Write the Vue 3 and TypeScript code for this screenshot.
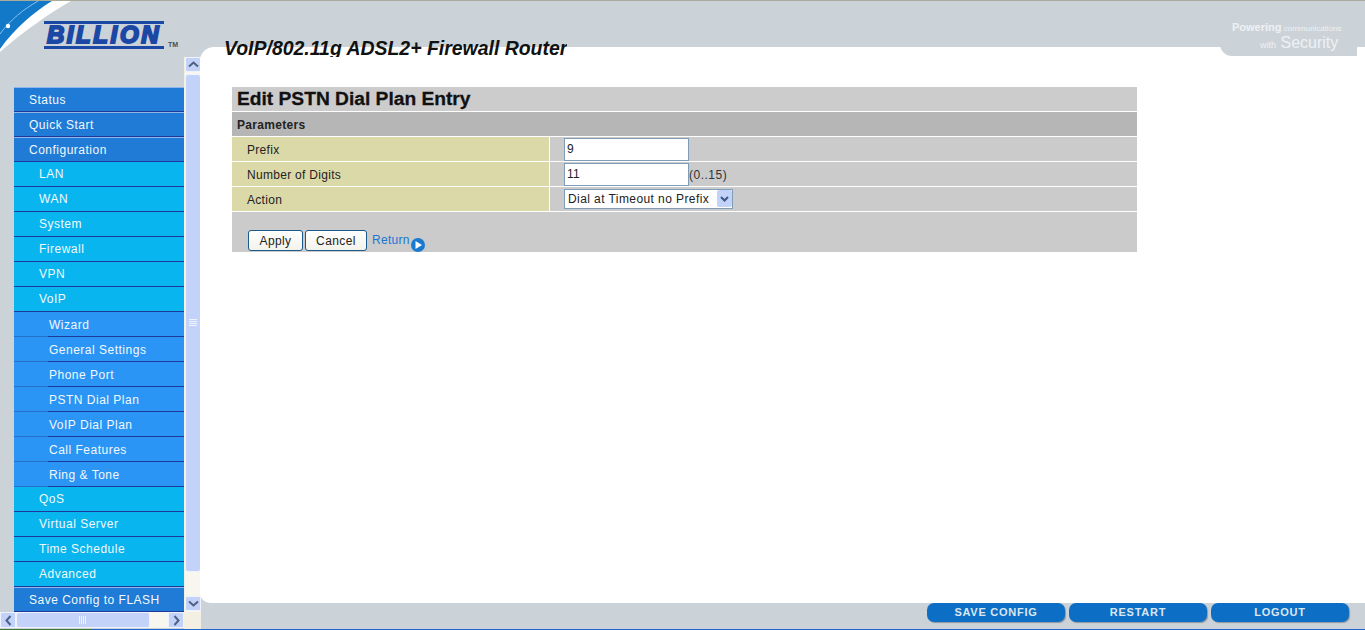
<script setup lang="ts">
const menu: { label: string; level: number }[] = [
  { label: 'Status', level: 1 },
  { label: 'Quick Start', level: 1 },
  { label: 'Configuration', level: 1 },
  { label: 'LAN', level: 2 },
  { label: 'WAN', level: 2 },
  { label: 'System', level: 2 },
  { label: 'Firewall', level: 2 },
  { label: 'VPN', level: 2 },
  { label: 'VoIP', level: 2 },
  { label: 'Wizard', level: 3 },
  { label: 'General Settings', level: 3 },
  { label: 'Phone Port', level: 3 },
  { label: 'PSTN Dial Plan', level: 3 },
  { label: 'VoIP Dial Plan', level: 3 },
  { label: 'Call Features', level: 3 },
  { label: 'Ring & Tone', level: 3 },
  { label: 'QoS', level: 2 },
  { label: 'Virtual Server', level: 2 },
  { label: 'Time Schedule', level: 2 },
  { label: 'Advanced', level: 2 },
  { label: 'Save Config to FLASH', level: 1 },
]

const footerButtons = ['SAVE CONFIG', 'RESTART', 'LOGOUT']
</script>

<template>
  <div class="page">
    <header class="top">
      <svg class="swoosh" width="80" height="52" viewBox="0 0 80 52">
        <path d="M0 0H71C50 12 24 30 0 51Z" fill="#fff" />
        <path d="M0 0H52C34 11 15 27 0 48Z" fill="#1278c8" />
        <path d="M38 0C24 8 10 19 0 33" fill="none" stroke="#8cc0ea" stroke-width="1" />
        <circle cx="8" cy="25" r="2.2" fill="#fff" />
      </svg>
      <div class="logo">
        <div class="logo-word">BILLION</div>
        <span class="tm">TM</span>
      </div>
      <div class="title">VoIP/802.11g ADSL2+ Firewall Router</div>
      <div class="tagline">
        <div class="tag-line1"><b>Powering</b> communications</div>
        <div class="tag-line2"><small>with</small> Security</div>
      </div>
    </header>

    <div class="body">
      <aside class="side">
        <div class="side-top">
          <nav class="menu">
            <a
              v-for="item in menu"
              :key="item.label"
              class="menu-item"
              :class="`level-${item.level}`"
            >{{ item.label }}</a>
          </nav>
          <div class="vscroll">
            <div class="sb-btn">
              <svg width="11" height="7" viewBox="0 0 11 7"><path d="M1 5.5 5.5 1.5 10 5.5" fill="none" stroke="#4d6185" stroke-width="2" /></svg>
            </div>
            <div class="vthumb">
              <svg width="8" height="8" viewBox="0 0 8 8"><path d="M0 .5H8M0 2.5H8M0 4.5H8M0 6.5H8" stroke="#eef3ff" stroke-width="1" /></svg>
            </div>
            <div class="sb-btn">
              <svg width="11" height="7" viewBox="0 0 11 7"><path d="M1 1.5 5.5 5.5 10 1.5" fill="none" stroke="#4d6185" stroke-width="2" /></svg>
            </div>
          </div>
        </div>
        <div class="hscroll">
          <div class="sb-btn">
            <svg width="7" height="11" viewBox="0 0 7 11"><path d="M5.5 1 1.5 5.5 5.5 10" fill="none" stroke="#4d6185" stroke-width="2" /></svg>
          </div>
          <div class="hthumb">
            <svg width="8" height="8" viewBox="0 0 8 8"><path d="M.5 0V8M2.5 0V8M4.5 0V8M6.5 0V8" stroke="#eef3ff" stroke-width="1" /></svg>
          </div>
          <div class="sb-btn push">
            <svg width="7" height="11" viewBox="0 0 7 11"><path d="M1.5 1 5.5 5.5 1.5 10" fill="none" stroke="#4d6185" stroke-width="2" /></svg>
          </div>
        </div>
      </aside>

      <div class="right">
        <main class="panel">
          <table class="form">
            <colgroup>
              <col class="col-label" />
              <col />
            </colgroup>
            <tbody>
              <tr class="head"><th colspan="2">Edit PSTN Dial Plan Entry</th></tr>
              <tr class="sub"><th colspan="2">Parameters</th></tr>
              <tr>
                <td class="label">Prefix</td>
                <td class="value"><input class="field" type="text" value="9" /></td>
              </tr>
              <tr>
                <td class="label">Number of Digits</td>
                <td class="value"><input class="field" type="text" value="11" /><span class="hint">(0..15)</span></td>
              </tr>
              <tr>
                <td class="label">Action</td>
                <td class="value">
                  <div class="select-wrap">
                    <select class="select">
                      <option>Dial at Timeout no Prefix</option>
                    </select>
                    <span class="select-arrow">
                      <svg width="9" height="6" viewBox="0 0 9 6"><path d="M1 1 4.5 4.5 8 1" fill="none" stroke="#3d5687" stroke-width="2" /></svg>
                    </span>
                  </div>
                </td>
              </tr>
              <tr class="actions">
                <td colspan="2">
                  <div class="actions-row">
                    <button class="btn apply" type="button">Apply</button>
                    <button class="btn cancel" type="button">Cancel</button>
                    <a class="return">Return</a>
                    <svg class="return-icon" width="14" height="14" viewBox="0 0 14 14">
                      <circle cx="7" cy="7" r="7" fill="#1a7ad2" />
                      <path d="M4.5 3 11 7 4.5 11Z" fill="#fff" />
                    </svg>
                  </div>
                </td>
              </tr>
            </tbody>
          </table>
        </main>
        <footer class="bottom">
          <button v-for="b in footerButtons" :key="b" class="foot-btn" type="button">{{ b }}</button>
        </footer>
      </div>
    </div>
    <div class="edge"></div>
  </div>
</template>

<style>
html, body {
  margin: 0;
  background: #cbd3d9;
}
</style>

<style scoped>
.page {
  width: 1365px;
  height: 630px;
  overflow: hidden;
  display: flex;
  flex-direction: column;
  background: #cbd3d9;
  font-family: "Liberation Sans", Arial, sans-serif;
  border-top: 1px solid #a9a99c;
  box-sizing: border-box;
}

.top {
  position: relative;
  height: 46px;
  flex: none;
  display: flex;
  z-index: 2;
}

.swoosh {
  position: absolute;
  left: 0;
  top: 0;
}

.logo {
  margin: 20px 0 0 44px;
  width: 156px;
  display: flex;
  align-items: flex-end;
  height: 28px;
}

.logo-word {
  width: 120px;
  height: 22px;
  border-top: 3px solid #1b48a4;
  border-bottom: 3px solid #1b48a4;
  color: #1b48a4;
  font: italic 900 24px/22px "Liberation Sans", Arial, sans-serif;
  letter-spacing: 2.6px;
  -webkit-text-stroke: 2px #1b48a4;
  text-align: center;
  white-space: nowrap;
  overflow: hidden;
}

.tm {
  font-size: 7px;
  font-weight: 700;
  color: #44505a;
  margin-left: 4px;
  line-height: 9px;
}

.title {
  margin: 37px 0 0 24px;
  height: 19px;
  line-height: 20px;
  overflow: hidden;
  font-size: 19.45px;
  font-weight: 700;
  font-style: italic;
  color: #111;
  white-space: nowrap;
}

.tagline {
  position: absolute;
  right: 8px;
  top: 0;
  width: 137px;
  height: 55px;
  background: #cbd3d9;
  border-bottom-left-radius: 12px;
  color: #eef1f3;
  box-sizing: border-box;
  padding: 20px 0 0 12px;
}

.tag-line1 {
  font-size: 8px;
  line-height: 12px;
  white-space: nowrap;
}

.tag-line1 b {
  font-size: 11px;
}

.tag-line2 {
  font-size: 16px;
  line-height: 15px;
  padding-left: 28px;
  white-space: nowrap;
}

.tag-line2 small {
  font-size: 9px;
}

.body {
  flex: 1;
  min-height: 0;
  display: flex;
}

.side {
  width: 201px;
  flex: none;
  display: flex;
  flex-direction: column;
  background: linear-gradient(to right, #cbd3d9 184px, #f3efe2 184px);
}

.side-top {
  height: 565px;
  display: flex;
  background: linear-gradient(to bottom, #cbd3d9 10px, transparent 10px);
}

.menu {
  width: 170px;
  margin: 40px 0 0 14px;
  flex: none;
  display: flex;
  flex-direction: column;
}

.menu-item {
  display: block;
  height: 25px;
  box-sizing: border-box;
  line-height: 23px;
  font-size: 12px;
  letter-spacing: 0.5px;
  color: #f2f8fd;
  white-space: nowrap;
  border-top: 1px solid #8eb6ea;
  border-bottom: 1px solid #1d3a9a;
}

.level-1 {
  padding-left: 15px;
  line-height: 24px;
  background: #1f7bd5;
}

.level-2 {
  padding-left: 25px;
  background: #09b5ee;
  border-top-color: #09b5ee;
}

.level-3 {
  padding-left: 35px;
  line-height: 24px;
  background: linear-gradient(to right, #2670c8 34px, #1d3a9a 34px) bottom / 100% 1px no-repeat, #2b95f5;
  border-top-color: #2b95f5;
  border-bottom: 0;
}

.vscroll {
  width: 16px;
  margin: 10px 0 0 1px;
  flex: none;
  display: flex;
  flex-direction: column;
  background: #f7f6ef;
}

.sb-btn {
  width: 16px;
  height: 15px;
  flex: none;
  display: flex;
  align-items: center;
  justify-content: center;
  box-sizing: border-box;
  background: #c3d2f8;
  border: 1px solid #eef3ff;
  border-radius: 2px;
}

.vthumb {
  flex: none;
  height: 498px;
  margin: 2px 0 24px;
  display: flex;
  align-items: center;
  justify-content: center;
  box-sizing: border-box;
  background: #c3d2f8;
  border: 1px solid #eef3ff;
  border-radius: 3px;
}

.hscroll {
  width: 184px;
  height: 16px;
  display: flex;
  background: #f7f6ef;
}

.hthumb {
  width: 134px;
  display: flex;
  align-items: center;
  justify-content: center;
  box-sizing: border-box;
  background: #c3d2f8;
  border: 1px solid #eef3ff;
  border-radius: 3px;
}

.push {
  margin-left: auto;
}

.hscroll .sb-btn {
  height: 16px;
}

.right {
  flex: 1;
  min-width: 0;
  display: flex;
  flex-direction: column;
}

.panel {
  height: 556px;
  flex: none;
  background: #fff;
  border-radius: 14px 0 0 10px;
  margin-left: -1px;
  box-sizing: border-box;
  padding: 40px 0 0 32px;
}

.form {
  width: 905px;
  border-collapse: separate;
  border-spacing: 0;
  table-layout: fixed;
}

.col-label {
  width: 318px;
}

.form th,
.form td {
  padding: 0;
  border-bottom: 1px solid #fff;
  text-align: left;
  box-sizing: border-box;
}

.form .head th {
  height: 25px;
  background: #cccccc;
  padding-left: 5px;
  font-size: 19.2px;
  line-height: 24px;
  font-weight: 700;
  -webkit-text-stroke: 0.3px #111;
  color: #111;
}

.form .sub th {
  height: 25px;
  background: #b6b6b6;
  padding: 1px 0 0 5px;
  font-size: 12px;
  letter-spacing: 0.3px;
  font-weight: 700;
  color: #222;
}

.form td.label {
  height: 25px;
  background: #dcd9a9;
  border-right: 1px solid #fff;
  padding: 2px 0 0 15px;
  font-size: 12px;
  letter-spacing: 0.3px;
  color: #222;
}

.form td.value {
  height: 25px;
  background: #cbcbcb;
  padding-left: 14px;
  font-size: 12px;
  color: #333;
  white-space: nowrap;
}

.field {
  width: 125px;
  height: 23px;
  box-sizing: border-box;
  border: 1px solid #7f9db9;
  background: #fff;
  padding: 0 2px;
  margin: 0;
  font: 12px "Liberation Sans", Arial, sans-serif;
  letter-spacing: 0.3px;
  color: #222;
  vertical-align: middle;
  outline: none;
}

.hint {
  letter-spacing: 0.5px;
  vertical-align: middle;
}

.select-wrap {
  position: relative;
  width: 169px;
  height: 20px;
}

.select {
  display: block;
  width: 100%;
  height: 100%;
  box-sizing: border-box;
  appearance: none;
  border: 1px solid #7f9db9;
  border-radius: 0;
  background: #fff;
  padding: 0 0 0 3px;
  font: 12px "Liberation Sans", Arial, sans-serif;
  letter-spacing: 0.42px;
  color: #222;
  outline: none;
}

.select-arrow {
  position: absolute;
  right: 1px;
  top: 1px;
  width: 15px;
  height: 17px;
  display: flex;
  align-items: center;
  justify-content: center;
  background: #c3d2f8;
  border-radius: 2px;
}

.form .actions td {
  height: 40px;
  background: #cbcbcb;
  border-bottom: 0;
}

.actions-row {
  display: flex;
  align-items: flex-start;
  padding: 18px 0 0 16px;
  height: 40px;
  box-sizing: border-box;
}

.btn {
  height: 21px;
  box-sizing: border-box;
  border: 1px solid #1c5a8e;
  border-radius: 3px;
  background: linear-gradient(#fff, #f3f2ea);
  padding: 0;
  font: 12px "Liberation Sans", Arial, sans-serif;
  letter-spacing: 0.4px;
  color: #222;
}

.apply {
  width: 55px;
}

.cancel {
  width: 62px;
  margin-left: 2px;
}

.return {
  margin-left: 5px;
  font-size: 12px;
  line-height: 21px;
  color: #1a76d4;
  letter-spacing: 0.3px;
}

.return-icon {
  margin: 8px 0 0 1px;
}

.bottom {
  height: 24px;
  flex: none;
  display: flex;
  gap: 4px;
  padding-left: 726px;
  box-sizing: border-box;
}

.foot-btn {
  width: 138px;
  height: 19px;
  border: 0;
  border-radius: 7px;
  background: #0c6ec4;
  box-shadow: 1px 1px 1px #8e979d;
  padding: 0 0 1px;
  font: 700 11px "Liberation Sans", Arial, sans-serif;
  letter-spacing: 0.75px;
  color: #dbe7f1;
}

.edge {
  height: 1px;
  flex: none;
  background: linear-gradient(to right, #3a7a35 92px, #2264c8 92px);
}
</style>
